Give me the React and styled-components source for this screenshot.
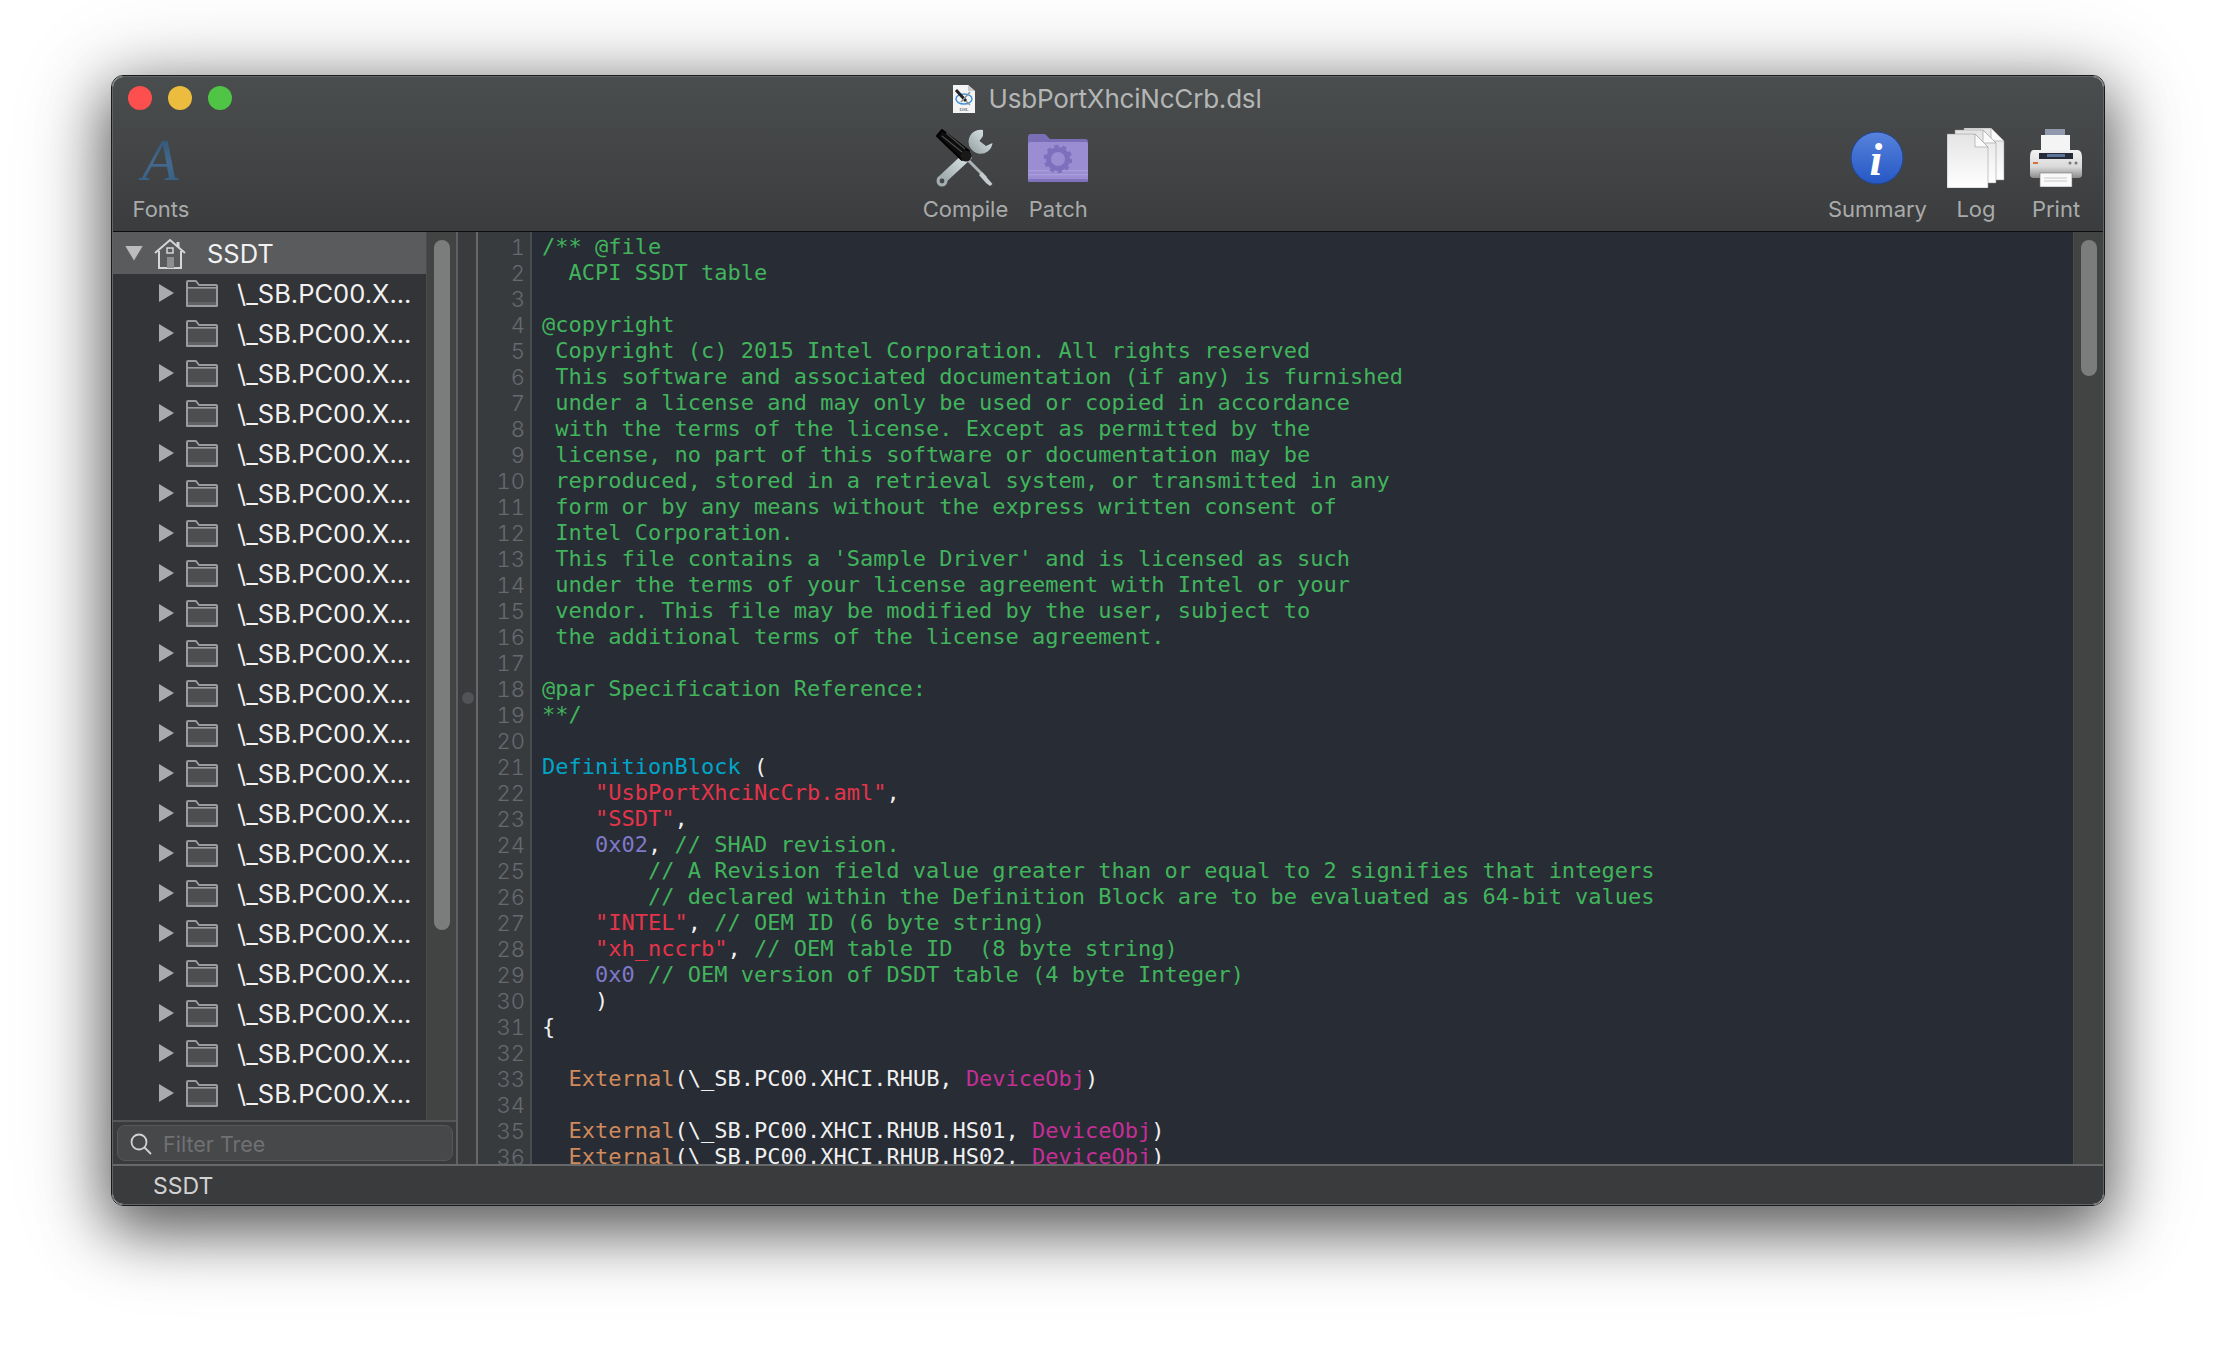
import styled, { createGlobalStyle } from "styled-components";

const UI_FONT = `Inter, "Liberation Sans", sans-serif`;

const GlobalStyle = createGlobalStyle`
  html, body {
    margin: 0;
    background: #ffffff;
  }
`;

const Page = styled.div`
  width: 2216px;
  height: 1354px;
  padding: 75px 0 0 111px;
  box-sizing: border-box;
  overflow: hidden;
  font-family: ${UI_FONT};
`;

const Window = styled.div`
  width: 1994px;
  height: 1131px;
  box-sizing: border-box;
  border: 1px solid #1a1a1a;
  border-radius: 12px;
  box-shadow: 0 20px 60px 4px rgba(0, 0, 0, 0.58), 0 10px 100px 6px rgba(0, 0, 0, 0.2);
`;

const WindowInner = styled.div`
  height: 100%;
  box-sizing: border-box;
  border: 1px solid #626465;
  border-radius: 11px;
  overflow: hidden;
  display: flex;
  flex-direction: column;
`;

const Toolbar = styled.header`
  height: 155px;
  flex: none;
  box-sizing: border-box;
  border-bottom: 1px solid #0e0e0e;
  background: linear-gradient(#4a4d4e, #3b3c3d);
`;

const TitleRow = styled.div`
  height: 42px;
  display: grid;
  grid-template-columns: 1fr auto 1fr;
  align-items: center;
`;

const Lights = styled.div`
  display: flex;
  gap: 16px;
  padding-left: 15px;
`;

const Light = styled.span`
  width: 24px;
  height: 24px;
  border-radius: 50%;
  background: ${(p) => p.$color};
`;

const Title = styled.div`
  display: flex;
  align-items: center;
  gap: 14px;
  margin: 1px 2px 0 0;
  font-size: 26px;
  letter-spacing: -0.2px;
  color: #b4b6b6;
`;

const Tools = styled.div`
  display: flex;
  justify-content: space-between;
  padding: 8px 19px 0 18px;
`;

const ToolGroup = styled.div`
  display: flex;
  gap: 20px;
  margin-right: ${(p) => p.$nudge || 0}px;
`;

const Tool = styled.div`
  display: flex;
  flex-direction: column;
  align-items: center;
  min-width: ${(p) => p.$width || 0}px;
  margin-left: ${(p) => p.$gap || 0}px;
`;

const ToolIcon = styled.div`
  height: 62px;
  display: flex;
  align-items: center;
  justify-content: center;
`;

const ToolLabel = styled.div`
  margin-top: 6px;
  font-size: 22px;
  line-height: 28px;
  color: #a9abab;
`;

const Main = styled.div`
  height: 932px;
  flex: none;
  display: flex;
  background: #3a3b3d;
`;

const Sidebar = styled.aside`
  width: 345px;
  flex: none;
  box-sizing: border-box;
  border-right: 2px solid #5f6061;
  display: flex;
  flex-direction: column;
`;

const TreePane = styled.div`
  height: 888px;
  flex: none;
  display: flex;
`;

const Tree = styled.div`
  flex: 1;
  background: #333437;
`;

const RootRow = styled.div`
  height: 42px;
  display: flex;
  align-items: center;
  padding-left: 12px;
  background: #5a5b5d;
  font-size: 25.5px;
  color: #f2f2f2;
`;

const Row = styled.div`
  height: 40px;
  box-sizing: border-box;
  padding: 0 0 2px 46px;
  display: flex;
  align-items: center;
  font-size: 25.5px;
  color: #f2f2f2;
`;

const Arrow = styled.span`
  flex: none;
  width: ${(p) => (p.$open ? 18 : 15)}px;
  height: ${(p) => (p.$open ? 15 : 18)}px;
  background: ${(p) => (p.$open ? "#bcbcbe" : "#a9aaac")};
  clip-path: ${(p) =>
    p.$open ? "polygon(0 0, 100% 0, 50% 100%)" : "polygon(0 0, 100% 50%, 0 100%)"};
`;

const RootIcon = styled.span`
  display: flex;
  margin: 0 21px 0 11px;
`;

const RowIcon = styled.span`
  display: flex;
  margin: 0 19px 0 12px;
`;

const Track = styled.div`
  width: 30px;
  flex: none;
  box-sizing: border-box;
  padding-top: ${(p) => p.$top}px;
  display: flex;
  justify-content: center;
  background: #424443;
  border-left: 1px solid #4a4b4b;
`;

const Thumb = styled.div`
  width: 16px;
  height: ${(p) => p.$height}px;
  border-radius: 8px;
  background: #7b7d7d;
`;

const FilterBar = styled.div`
  flex: 1;
  box-sizing: border-box;
  border-top: 2px solid #55565a;
  padding: 3px 3px 3px 4px;
  background: #3a3b3d;
`;

const FilterField = styled.div`
  height: 36px;
  box-sizing: border-box;
  padding: 1px 0 0 12px;
  display: flex;
  align-items: center;
  gap: 11px;
  border: 1px solid #565759;
  border-radius: 8px;
  background: #47484a;
  font-size: 21.5px;
  color: #6f7173;
`;

const Splitter = styled.div`
  width: 18px;
  flex: none;
  display: flex;
  align-items: center;
  justify-content: center;
`;

const SplitDot = styled.span`
  width: 12px;
  height: 12px;
  margin-left: 2px;
  border-radius: 50%;
  background: #515356;
`;

const Editor = styled.section`
  flex: 1;
  min-width: 0;
  display: flex;
  border-left: 2px solid #66686a;
`;

const Gutter = styled.div`
  width: 54px;
  flex: none;
  box-sizing: border-box;
  height: 932px;
  overflow: hidden;
  padding: 2px 5px 0 0;
  border-right: 2px solid #494c50;
  background: #383b3e;
  text-align: right;
  font-size: 22px;
  font-weight: 300;
  line-height: 26px;
  font-variant-numeric: tabular-nums;
  color: #666a6e;
`;

const LineNumber = styled.div`
  height: 26px;
`;

const Code = styled.div`
  flex: 1;
  min-width: 0;
  height: 932px;
  overflow: hidden;
  box-sizing: border-box;
  padding: 2px 0 0 10px;
  background: #282c35;
  font-family: "DejaVu Sans Mono", "Liberation Mono", monospace;
  font-size: 22px;
  line-height: 26px;
  color: #f0f0f0;
`;

const CodeLine = styled.div`
  height: 26px;
  white-space: pre;
`;

const TOKEN_COLORS = {
  c: "#41b45c",
  s: "#e4344a",
  n: "#7f79c9",
  k: "#00a5c8",
  e: "#d08a5c",
  d: "#c42f96",
  p: "#f0f0f0",
};

const Token = styled.span`
  color: ${(p) => TOKEN_COLORS[p.$kind]};
`;

const StatusBar = styled.footer`
  flex: 1;
  box-sizing: border-box;
  display: flex;
  align-items: center;
  padding: 1px 0 0 40px;
  border-top: 2px solid #66686a;
  background: #3a3b3d;
  font-size: 23px;
  color: #d2d2d2;
`;

const CODE = [
  [["c", "/** @file"]],
  [["c", "  ACPI SSDT table"]],
  [],
  [["c", "@copyright"]],
  [["c", " Copyright (c) 2015 Intel Corporation. All rights reserved"]],
  [["c", " This software and associated documentation (if any) is furnished"]],
  [["c", " under a license and may only be used or copied in accordance"]],
  [["c", " with the terms of the license. Except as permitted by the"]],
  [["c", " license, no part of this software or documentation may be"]],
  [["c", " reproduced, stored in a retrieval system, or transmitted in any"]],
  [["c", " form or by any means without the express written consent of"]],
  [["c", " Intel Corporation."]],
  [["c", " This file contains a 'Sample Driver' and is licensed as such"]],
  [["c", " under the terms of your license agreement with Intel or your"]],
  [["c", " vendor. This file may be modified by the user, subject to"]],
  [["c", " the additional terms of the license agreement."]],
  [],
  [["c", "@par Specification Reference:"]],
  [["c", "**/"]],
  [],
  [["k", "DefinitionBlock"], ["p", " ("]],
  [["p", "    "], ["s", '"UsbPortXhciNcCrb.aml"'], ["p", ","]],
  [["p", "    "], ["s", '"SSDT"'], ["p", ","]],
  [["p", "    "], ["n", "0x02"], ["p", ", "], ["c", "// SHAD revision."]],
  [["c", "        // A Revision field value greater than or equal to 2 signifies that integers"]],
  [["c", "        // declared within the Definition Block are to be evaluated as 64-bit values"]],
  [["p", "    "], ["s", '"INTEL"'], ["p", ", "], ["c", "// OEM ID (6 byte string)"]],
  [["p", "    "], ["s", '"xh_nccrb"'], ["p", ", "], ["c", "// OEM table ID  (8 byte string)"]],
  [["p", "    "], ["n", "0x0"], ["p", " "], ["c", "// OEM version of DSDT table (4 byte Integer)"]],
  [["p", "    )"]],
  [["p", "{"]],
  [],
  [["p", "  "], ["e", "External"], ["p", "(\\_SB.PC00.XHCI.RHUB, "], ["d", "DeviceObj"], ["p", ")"]],
  [],
  [["p", "  "], ["e", "External"], ["p", "(\\_SB.PC00.XHCI.RHUB.HS01, "], ["d", "DeviceObj"], ["p", ")"]],
  [["p", "  "], ["e", "External"], ["p", "(\\_SB.PC00.XHCI.RHUB.HS02, "], ["d", "DeviceObj"], ["p", ")"]],
];

const TREE_ROWS = Array.from({ length: 21 }, (_, i) => i);

const DocIcon = () => (
  <svg width="22" height="28" viewBox="0 0 22 28">
    <path d="M0 0H15L22 6V28H0Z" fill="#f4f4f4" />
    <path d="M15 0L22 6H15Z" fill="#c9c9c9" />
    <ellipse cx="11" cy="14" rx="8" ry="5" fill="none" stroke="#3f8fd6" strokeWidth="1.4" />
    <path d="M3 5L13 16" stroke="#222" strokeWidth="3" />
    <path d="M13 16L17 20M17 7L8 17" stroke="#8a9299" strokeWidth="1.5" />
    <text x="11" y="26" fontSize="5" fontFamily="Liberation Serif" textAnchor="middle" fill="#444">
      DSL
    </text>
  </svg>
);

const FontsIcon = () => (
  <svg width="60" height="72" viewBox="0 0 60 72">
    <defs>
      <linearGradient id="fontA" x1="0" y1="0" x2="0" y2="1">
        <stop offset="0" stopColor="#2d4f6e" />
        <stop offset="0.55" stopColor="#436a8e" />
        <stop offset="1" stopColor="#2f5a80" />
      </linearGradient>
    </defs>
    <text x="29" y="58" fontSize="60" fontStyle="italic" fontFamily="Liberation Serif" textAnchor="middle" fill="url(#fontA)">
      A
    </text>
  </svg>
);

const CompileIcon = () => (
  <svg width="58" height="58" viewBox="0 0 58 58">
    <defs>
      <linearGradient id="steel" x1="0" y1="1" x2="1" y2="0">
        <stop offset="0" stopColor="#8f9a9c" />
        <stop offset="0.6" stopColor="#c4cfd2" />
        <stop offset="1" stopColor="#dfe9ec" />
      </linearGradient>
    </defs>
    <path d="M1 49L7 56L36 29L30 22Z" fill="url(#steel)" />
    <circle cx="6" cy="52" r="5.5" fill="#a3adaf" />
    <circle cx="6" cy="52" r="2.4" fill="#45474a" />
    <path d="M47 1A12 12 0 1 0 56.5 14L50 17L43.5 12L47 7Z" fill="url(#steel)" />
    <path d="M30 29L50 49" stroke="#aeb4b6" strokeWidth="3" />
    <path d="M46 43L53 51L56.5 55L54 57L50 54L43 46Z" fill="#c5cbcd" />
    <path d="M1 7L6 1L33 22L26 31Z" fill="#0d0d0d" stroke="#000" strokeWidth="2" strokeLinejoin="round" />
    <path d="M6 7L26 23M10 4L29 20" stroke="#4a4a4c" strokeWidth="1.3" />
    <circle cx="30" cy="27" r="5.5" fill="#191919" />
  </svg>
);

const PatchIcon = () => (
  <svg width="60" height="48" viewBox="0 0 60 48">
    <path d="M0 46V3Q0 0 3 0H17L22 5H57Q60 5 60 8V46Z" fill="#7a6fb6" />
    <rect y="8" width="60" height="40" rx="2" fill="#9a8dd2" />
    <rect y="36" width="60" height="1.4" fill="#a99ddb" />
    <rect y="40" width="60" height="1.4" fill="#a99ddb" />
    <rect y="45" width="60" height="3" rx="1.5" fill="#7f72bb" />
    <circle cx="30" cy="25" r="9.5" fill="none" stroke="#7d70bd" strokeWidth="5" />
    <circle cx="30" cy="25" r="12.5" fill="none" stroke="#7d70bd" strokeWidth="3.5" strokeDasharray="4.1 3.75" />
  </svg>
);

const SummaryIcon = () => (
  <svg width="54" height="54" viewBox="0 0 54 54">
    <defs>
      <linearGradient id="infoBlue" x1="0" y1="0" x2="0" y2="1">
        <stop offset="0" stopColor="#5783dc" />
        <stop offset="1" stopColor="#2657c4" />
      </linearGradient>
    </defs>
    <circle cx="27" cy="27" r="26" fill="url(#infoBlue)" stroke="#1f4795" strokeWidth="1" />
    <text x="26" y="44" fontSize="46" fontWeight="700" fontStyle="italic" fontFamily="Liberation Serif" textAnchor="middle" fill="#ffffff">
      i
    </text>
  </svg>
);

const Sheet = ({ x, y, w, h }) => (
  <g>
    <path d={`M${x} ${y}H${x + w - 13}L${x + w} ${y + 13}V${y + h}H${x}Z`} fill="url(#paper)" stroke="#8d8d8d" strokeWidth="0.5" />
    <path d={`M${x + w - 13} ${y}L${x + w} ${y + 13}H${x + w - 13}Z`} fill="#fafafa" stroke="#9a9a9a" strokeWidth="0.6" />
  </g>
);

const LogIcon = () => (
  <svg width="58" height="60" viewBox="0 0 58 60">
    <defs>
      <linearGradient id="paper" x1="0" y1="0" x2="0" y2="1">
        <stop offset="0" stopColor="#e4e4e4" />
        <stop offset="1" stopColor="#ffffff" />
      </linearGradient>
    </defs>
    <Sheet x={17} y={0} w={40} h={52} />
    <Sheet x={8} y={2} w={41} h={53} />
    <Sheet x={0} y={6} w={41} h={54} />
  </svg>
);

const PrintIcon = () => (
  <svg width="54" height="58" viewBox="0 0 54 58">
    <defs>
      <linearGradient id="printerBody" x1="0" y1="0" x2="0" y2="1">
        <stop offset="0" stopColor="#f2f2f2" />
        <stop offset="0.6" stopColor="#d9d9d9" />
        <stop offset="1" stopColor="#8c8c8c" />
      </linearGradient>
    </defs>
    <rect x="16" y="0" width="20" height="7" fill="#8f99ab" />
    <rect x="12" y="6" width="29" height="20" fill="#f4f4f4" />
    <path d="M4 21H49Q53 22 53 28V46Q53 49 49 49H5Q1 49 1 46V28Q1 22 4 21Z" fill="url(#printerBody)" />
    <rect x="10" y="24" width="34" height="6" fill="#252b38" />
    <rect x="18" y="25" width="18" height="3" fill="#5b7299" />
    <rect x="4" y="33" width="5" height="2" fill="#d9703a" />
    <circle cx="41" cy="34" r="1.5" fill="#777" />
    <circle cx="47" cy="34" r="1.5" fill="#777" />
    <rect x="11" y="44" width="32" height="14" fill="#fafafa" stroke="#777" strokeWidth="0.6" />
    <path d="M15 49H38M15 52H38" stroke="#c8c8c8" strokeWidth="1" />
  </svg>
);

const HouseIcon = () => (
  <svg width="32" height="31" viewBox="0 0 32 31" fill="none" stroke="#d6d6d6" strokeWidth="2">
    <path d="M1 15L16 2L31 15" />
    <path d="M24 4V9" strokeWidth="3" />
    <path d="M5 13V30H27V13" />
    <rect x="13" y="10" width="6" height="5" strokeWidth="1.5" />
    <rect x="13" y="19" width="7" height="11" fill="#8d8e90" stroke="none" />
  </svg>
);

const FolderIcon = () => (
  <svg width="32" height="27" viewBox="0 0 32 27">
    <path d="M1 26V2Q1 1 2 1H10L13 5H30Q31 5 31 6V26Z" fill="#3e3f42" stroke="#9a9b9d" strokeWidth="2" strokeLinejoin="round" />
    <rect x="2" y="8" width="28" height="15" fill="#4d4e50" />
    <rect x="1" y="7" width="30" height="1.6" fill="#9a9b9d" />
    <rect x="2" y="22" width="28" height="3" fill="#616264" />
  </svg>
);

const SearchIcon = () => (
  <svg width="22" height="22" viewBox="0 0 22 22" fill="none" stroke="#d2d2d2" strokeWidth="1.8">
    <circle cx="9" cy="9" r="7.5" />
    <path d="M14.5 14.5L21 21" />
  </svg>
);

const App = () => {
  return (
    <Page>
      <GlobalStyle />
      <Window>
        <WindowInner>
          <Toolbar>
            <TitleRow>
              <Lights>
                <Light $color="#fd4f4d" />
                <Light $color="#ebbc3e" />
                <Light $color="#50c444" />
              </Lights>
              <Title>
                <DocIcon />
                UsbPortXhciNcCrb.dsl
              </Title>
            </TitleRow>
            <Tools>
              <ToolGroup>
                <Tool>
                  <ToolIcon>
                    <FontsIcon />
                  </ToolIcon>
                  <ToolLabel>Fonts</ToolLabel>
                </Tool>
              </ToolGroup>
              <ToolGroup $nudge={8}>
                <Tool>
                  <ToolIcon>
                    <CompileIcon />
                  </ToolIcon>
                  <ToolLabel>Compile</ToolLabel>
                </Tool>
                <Tool>
                  <ToolIcon>
                    <PatchIcon />
                  </ToolIcon>
                  <ToolLabel>Patch</ToolLabel>
                </Tool>
              </ToolGroup>
              <ToolGroup>
                <Tool>
                  <ToolIcon>
                    <SummaryIcon />
                  </ToolIcon>
                  <ToolLabel>Summary</ToolLabel>
                </Tool>
                <Tool $width={58}>
                  <ToolIcon>
                    <LogIcon />
                  </ToolIcon>
                  <ToolLabel>Log</ToolLabel>
                </Tool>
                <Tool $width={56} $gap={3}>
                  <ToolIcon>
                    <PrintIcon />
                  </ToolIcon>
                  <ToolLabel>Print</ToolLabel>
                </Tool>
              </ToolGroup>
            </Tools>
          </Toolbar>
          <Main>
            <Sidebar>
              <TreePane>
                <Tree>
                  <RootRow>
                    <Arrow $open />
                    <RootIcon>
                      <HouseIcon />
                    </RootIcon>
                    SSDT
                  </RootRow>
                  {TREE_ROWS.map((i) => (
                    <Row key={i}>
                      <Arrow />
                      <RowIcon>
                        <FolderIcon />
                      </RowIcon>
                      \_SB.PC00.X...
                    </Row>
                  ))}
                </Tree>
                <Track $top={8}>
                  <Thumb $height={690} />
                </Track>
              </TreePane>
              <FilterBar>
                <FilterField>
                  <SearchIcon />
                  Filter Tree
                </FilterField>
              </FilterBar>
            </Sidebar>
            <Splitter>
              <SplitDot />
            </Splitter>
            <Editor>
              <Gutter>
                {CODE.map((_, i) => (
                  <LineNumber key={i}>{i + 1}</LineNumber>
                ))}
              </Gutter>
              <Code>
                {CODE.map((tokens, i) => (
                  <CodeLine key={i}>
                    {tokens.map(([kind, text], j) => (
                      <Token key={j} $kind={kind}>
                        {text}
                      </Token>
                    ))}
                  </CodeLine>
                ))}
              </Code>
              <Track $top={8}>
                <Thumb $height={136} />
              </Track>
            </Editor>
          </Main>
          <StatusBar>SSDT</StatusBar>
        </WindowInner>
      </Window>
    </Page>
  );
};

export default App;
